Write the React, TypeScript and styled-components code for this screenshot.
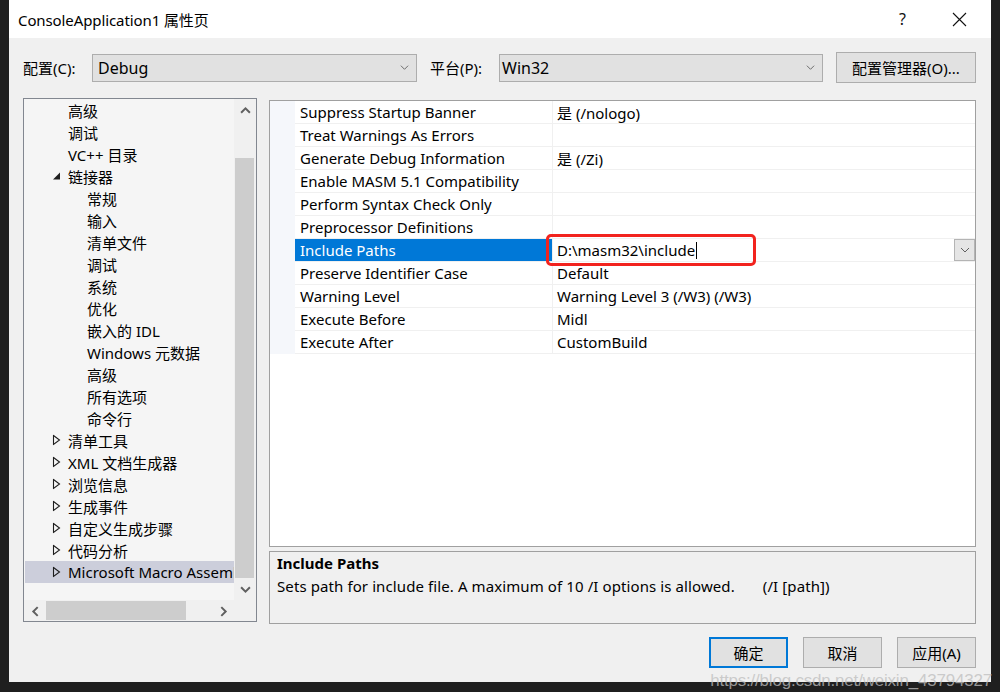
import React from "react";
import styled, { createGlobalStyle, css } from "styled-components";

const GlobalStyle = createGlobalStyle`
  html, body {
    margin: 0;
    padding: 0;
    background: #1f1f1f;
  }
  * {
    box-sizing: border-box;
  }
`;

const FONT = `"Noto Sans", "Noto Sans CJK SC", sans-serif`;

// 左侧树里的项目
type TreeItem = { label: string; level: 1 | 2; expander?: "open" | "closed"; selected?: boolean };

const TREE: TreeItem[] = [
  { label: "高级", level: 1 },
  { label: "调试", level: 1 },
  { label: "VC++ 目录", level: 1 },
  { label: "链接器", level: 1, expander: "open" },
  { label: "常规", level: 2 },
  { label: "输入", level: 2 },
  { label: "清单文件", level: 2 },
  { label: "调试", level: 2 },
  { label: "系统", level: 2 },
  { label: "优化", level: 2 },
  { label: "嵌入的 IDL", level: 2 },
  { label: "Windows 元数据", level: 2 },
  { label: "高级", level: 2 },
  { label: "所有选项", level: 2 },
  { label: "命令行", level: 2 },
  { label: "清单工具", level: 1, expander: "closed" },
  { label: "XML 文档生成器", level: 1, expander: "closed" },
  { label: "浏览信息", level: 1, expander: "closed" },
  { label: "生成事件", level: 1, expander: "closed" },
  { label: "自定义生成步骤", level: 1, expander: "closed" },
  { label: "代码分析", level: 1, expander: "closed" },
  { label: "Microsoft Macro Assembler", level: 1, expander: "closed", selected: true },
];

type Prop = { name: string; value: string; editing?: boolean };

const PROPS: Prop[] = [
  { name: "Suppress Startup Banner", value: "是 (/nologo)" },
  { name: "Treat Warnings As Errors", value: "" },
  { name: "Generate Debug Information", value: "是 (/Zi)" },
  { name: "Enable MASM 5.1 Compatibility", value: "" },
  { name: "Perform Syntax Check Only", value: "" },
  { name: "Preprocessor Definitions", value: "" },
  { name: "Include Paths", value: "D:\\masm32\\include", editing: true },
  { name: "Preserve Identifier Case", value: "Default" },
  { name: "Warning Level", value: "Warning Level 3 (/W3) (/W3)" },
  { name: "Execute Before", value: "Midl" },
  { name: "Execute After", value: "CustomBuild" },
];

const Chevron = ({ dir = "down", size = 9, weight = 1, color = "#606060" }: { dir?: "up" | "down" | "left" | "right"; size?: number; weight?: number; color?: string }) => {
  const rot = { down: 0, up: 180, left: 90, right: -90 }[dir];
  return (
    <svg width={size} height={size} viewBox="0 0 10 10" style={{ transform: `rotate(${rot}deg)` }}>
      <polyline points="1,3 5,7 9,3" fill="none" stroke={color} strokeWidth={weight} />
    </svg>
  );
};

const App = () => {
  return (
    <>
      <GlobalStyle />
      <Page>
        <Dialog>
          <TitleBar>
            <Title>ConsoleApplication1 属性页</Title>
            <TitleButtons>
              <TitleButton>?</TitleButton>
              <TitleButton>
                <svg width="15" height="15" viewBox="0 0 15 15">
                  <path d="M1 1 L14 14 M14 1 L1 14" stroke="#111" strokeWidth="1.1" />
                </svg>
              </TitleButton>
            </TitleButtons>
          </TitleBar>

          <Body>
            <ConfigRow>
              <FieldLabel>配置(C):</FieldLabel>
              <Combo $width={325}>
                <ComboText>Debug</ComboText>
                <Chevron />
              </Combo>
              <FieldLabel $gap>平台(P):</FieldLabel>
              <Combo $width={324} $tight>
                <ComboText>Win32</ComboText>
                <Chevron />
              </Combo>
              <PushButton>配置管理器(O)...</PushButton>
            </ConfigRow>

            <Main>
              <TreePanel>
                <TreeList>
                  {TREE.map((item, i) => (
                    <TreeRow key={i} $level={item.level} $selected={item.selected}>
                      {item.expander && (
                        <Expander>
                          {item.expander === "open" ? (
                            <svg width="9" height="9" viewBox="0 0 9 9">
                              <polygon points="8,1 8,8 1,8" fill="#1e1e1e" />
                            </svg>
                          ) : (
                            <svg width="9" height="11" viewBox="0 0 9 11">
                              <polygon points="1.5,1 7.5,5.5 1.5,10" fill="none" stroke="#1e1e1e" strokeWidth="1.1" />
                            </svg>
                          )}
                        </Expander>
                      )}
                      {item.label}
                    </TreeRow>
                  ))}
                </TreeList>
                <VScroll>
                  <ScrollArrow>
                    <Chevron dir="up" size={11} weight={1.8} />
                  </ScrollArrow>
                  <VTrack>
                    <Thumb />
                  </VTrack>
                  <ScrollArrow>
                    <Chevron dir="down" size={11} weight={1.8} />
                  </ScrollArrow>
                </VScroll>
                <HScroll>
                  <ScrollArrow>
                    <Chevron dir="left" size={11} weight={1.8} />
                  </ScrollArrow>
                  <HTrack>
                    <Thumb />
                  </HTrack>
                  <ScrollArrow>
                    <Chevron dir="right" size={11} weight={1.8} />
                  </ScrollArrow>
                </HScroll>
                <Corner />
              </TreePanel>

              <RightColumn>
                <PropGrid>
                  {PROPS.map((p) => (
                    <PropRow key={p.name}>
                      <Gutter />
                      <NameCell $selected={p.editing}>{p.name}</NameCell>
                      <ValueCell>
                        {p.value}
                        {p.editing && (
                          <>
                            <Caret />
                            <DropButton>
                              <Chevron size={10} />
                            </DropButton>
                            <Highlight />
                          </>
                        )}
                      </ValueCell>
                    </PropRow>
                  ))}
                </PropGrid>
                <DescPanel>
                  <DescTitle>Include Paths</DescTitle>
                  <DescText>
                    Sets path for include file. A maximum of 10 /I options is allowed.
                    <DescSwitch>(/I [path])</DescSwitch>
                  </DescText>
                </DescPanel>
              </RightColumn>
            </Main>

            <ButtonRow>
              <DialogButton $primary>确定</DialogButton>
              <DialogButton>取消</DialogButton>
              <DialogButton>应用(A)</DialogButton>
            </ButtonRow>
          </Body>
        </Dialog>
        <Watermark>https://blog.csdn.net/weixin_43794327</Watermark>
      </Page>
    </>
  );
};

const Page = styled.div`
  position: relative;
  width: 1000px;
  height: 692px;
  padding-left: 9px;
  overflow: hidden;
  font-family: ${FONT};
  color: #000;
`;

const Dialog = styled.div`
  width: 982px;
  height: 682px;
  background: #f0f0f0;
  display: flex;
  flex-direction: column;
`;

const TitleBar = styled.div`
  height: 38px;
  background: #fff;
  display: flex;
  align-items: center;
  justify-content: space-between;
  padding-left: 9px;
`;

const Title = styled.div`
  font-size: 15px;
  letter-spacing: -0.1px;
`;

const TitleButtons = styled.div`
  display: flex;
  align-items: center;
  height: 100%;
  padding-right: 3px;
`;

const TitleButton = styled.div`
  width: 57px;
  height: 100%;
  display: flex;
  align-items: center;
  justify-content: center;
  font-size: 16px;
  color: #111;
`;

const Body = styled.div`
  flex: 1;
  display: flex;
  flex-direction: column;
  padding: 14px 15px 0 14px;
`;

const ConfigRow = styled.div`
  display: flex;
  align-items: center;
  height: 31px;
`;

const FieldLabel = styled.div<{ $gap?: boolean }>`
  font-size: 15px;
  width: 69px;
  white-space: nowrap;
  ${(p) =>
    p.$gap &&
    css`
      width: 82px;
      padding-left: 13px;
    `}
`;

const Combo = styled.div<{ $width: number; $tight?: boolean }>`
  width: ${(p) => p.$width}px;
  height: 28px;
  background: #e1e1e1;
  border: 1px solid #adadad;
  display: flex;
  align-items: center;
  justify-content: space-between;
  padding: 0 7px 0 ${(p) => (p.$tight ? 2 : 5)}px;
`;

const ComboText = styled.span`
  font-size: 16px;
`;

const PushButton = styled.div`
  margin-left: auto;
  width: 140px;
  height: 31px;
  background: #e1e1e1;
  border: 1px solid #adadad;
  display: flex;
  align-items: center;
  justify-content: center;
  font-size: 15px;
`;

const Main = styled.div`
  display: grid;
  grid-template-columns: 234px 1fr;
  column-gap: 12px;
  margin-top: 15px;
`;

const TreePanel = styled.div`
  height: 524px;
  border: 1px solid #828790;
  display: grid;
  grid-template-columns: 1fr 22px;
  grid-template-rows: 1fr 21px;
  background: #f5f5f5;
`;

const TreeList = styled.div`
  overflow: hidden;
  padding-left: 1px;
`;

const TreeRow = styled.div<{ $level: number; $selected?: boolean }>`
  position: relative;
  height: 22px;
  display: flex;
  align-items: center;
  white-space: nowrap;
  font-size: 15px;
  padding-left: ${(p) => (p.$level === 1 ? 43 : 62)}px;
  background: ${(p) => (p.$selected ? "#cccedb" : "transparent")};
`;

const Expander = styled.span`
  position: absolute;
  left: 27px;
  top: 50%;
  transform: translateY(-50%);
  display: flex;
`;

const VScroll = styled.div`
  background: #f0f0f0;
  display: flex;
  flex-direction: column;
`;

const HScroll = styled.div`
  background: #f0f0f0;
  display: flex;
`;

const ScrollArrow = styled.div`
  flex: 0 0 22px;
  height: 22px;
  display: flex;
  align-items: center;
  justify-content: center;
`;

const VTrack = styled.div`
  flex: 1;
  display: flex;
  flex-direction: column;
  padding: 37px 2px 0 1px;
`;

const HTrack = styled.div`
  flex: 1;
  display: flex;
  padding: 1px 26px 1px 0;
`;

const Thumb = styled.div`
  flex: 1;
  background: #cdcdcd;
`;

const Corner = styled.div`
  background: #f0f0f0;
`;

const RightColumn = styled.div`
  display: flex;
  flex-direction: column;
  gap: 4px;
  padding-top: 2px;
`;

const PropGrid = styled.div`
  height: 447px;
  border: 1px solid #a0a0a0;
  background: #fff;
`;

const PropRow = styled.div`
  display: grid;
  grid-template-columns: 25px 258px 1fr;
  height: 23px;
`;

const Gutter = styled.div`
  background: #f5f7fb;
`;

const NameCell = styled.div<{ $selected?: boolean }>`
  font-size: 15px;
  display: flex;
  align-items: center;
  padding-left: 5px;
  white-space: nowrap;
  border-bottom: 1px solid #f0f0f0;
  border-right: 1px solid #f0f0f0;
  ${(p) =>
    p.$selected &&
    css`
      background: #0078d7;
      color: #fff;
    `}
`;

const ValueCell = styled.div`
  position: relative;
  font-size: 15px;
  display: flex;
  align-items: center;
  padding-left: 4px;
  white-space: nowrap;
  border-bottom: 1px solid #f0f0f0;
`;

const Caret = styled.span`
  display: inline-block;
  width: 1px;
  height: 17px;
  background: #000;
  margin-left: 1px;
`;

const DropButton = styled.div`
  margin-left: auto;
  width: 21px;
  height: 22px;
  background: #e5e5e5;
  border: 1px solid #b4b4b4;
  display: flex;
  align-items: center;
  justify-content: center;
`;

const Highlight = styled.div`
  position: absolute;
  left: -7px;
  top: -5px;
  width: 210px;
  height: 32px;
  border: 3px solid #f2231e;
  border-radius: 5px;
  pointer-events: none;
`;

const DescPanel = styled.div`
  height: 73px;
  border: 1px solid #a0a0a0;
  background: #f0f0f0;
  padding: 1px 7px;
`;

const DescTitle = styled.div`
  font-size: 15px;
  font-weight: 700;
  line-height: 21px;
`;

const DescText = styled.div`
  font-size: 15px;
  line-height: 24px;
  white-space: nowrap;
  letter-spacing: 0.1px;
`;

const DescSwitch = styled.span`
  margin-left: 28px;
`;

const ButtonRow = styled.div`
  display: flex;
  justify-content: flex-end;
  gap: 15px;
  margin-top: 13px;
`;

const DialogButton = styled.div<{ $primary?: boolean }>`
  width: 79px;
  height: 31px;
  background: #e1e1e1;
  border: ${(p) => (p.$primary ? "2px solid #0078d7" : "1px solid #adadad")};
  display: flex;
  align-items: center;
  justify-content: center;
  font-size: 15px;
`;

const Watermark = styled.div`
  position: absolute;
  right: 8px;
  bottom: 1px;
  font-family: "Liberation Sans", sans-serif;
  font-size: 17px;
  color: rgba(190, 190, 190, 0.75);
  pointer-events: none;
  letter-spacing: -0.2px;
`;

export default App;
